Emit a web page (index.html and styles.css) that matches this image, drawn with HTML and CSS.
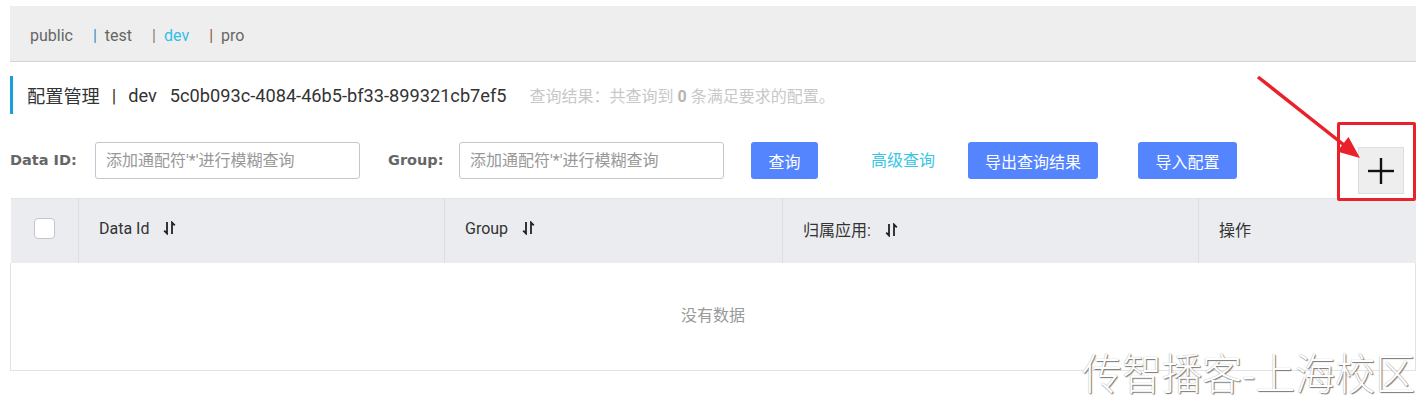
FILE: index.html
```html
<!DOCTYPE html>
<html lang="zh-CN">
  <head>
    <meta charset="UTF-8" />
    <title>配置管理</title>
    <link rel="stylesheet" href="styles.css">
  </head>
  <body>
    <div class="page">
      <!-- Namespace switcher -->
      <div class="ns-bar">
        <span class="ns-item">public</span>
        <span class="ns-sep sep-blue">|</span>
        <span class="ns-item">test</span>
        <span class="ns-sep sep-gray">|</span>
        <span class="ns-item active">dev</span>
        <span class="ns-sep sep-brown">|</span>
        <span class="ns-item">pro</span>
      </div>

      <div class="page-title">
        <span class="title-name">配置管理</span>
        <span class="title-sep">|</span>
        <span class="title-ns">dev</span>
        <span class="title-id">5c0b093c-4084-46b5-bf33-899321cb7ef5</span>
        <span class="query-info">查询结果：共查询到 <strong>0</strong> 条满足要求的配置。</span>
      </div>

      <!-- Search filters -->
      <div class="filter-row">
        <label class="filter-label label-dataid">Data ID:</label>
        <input type="text" class="filter-input" placeholder="添加通配符'*'进行模糊查询" />
        <label class="filter-label label-group">Group:</label>
        <input type="text" class="filter-input" placeholder="添加通配符'*'进行模糊查询" />
        <button class="btn btn-query">查询</button>
        <a href="#" class="advanced-link">高级查询</a>
        <button class="btn btn-export">导出查询结果</button>
        <button class="btn btn-import">导入配置</button>
        <button class="add-btn">
          <svg width="28" height="28" viewBox="0 0 28 28">
            <line x1="14" y1="1" x2="14" y2="27" stroke="#111" stroke-width="2.4"></line>
            <line x1="1" y1="14" x2="27" y2="14" stroke="#111" stroke-width="2.4"></line>
          </svg>
        </button>
      </div>

      <table class="config-table">
        <colgroup>
          <col style="width: 68px" />
          <col style="width: 366px" />
          <col style="width: 338px" />
          <col style="width: 416px" />
          <col />
        </colgroup>
        <thead>
          <tr>
            <th class="check-col"><span class="checkbox"></span></th>
            <th>
              Data Id
              <svg class="sort-icon" width="13" height="14" viewBox="0 0 13 14">
                <path d="M4 1 V12.5 L1.2 9.7" fill="none" stroke="#222" stroke-width="1.8"></path>
                <path d="M9 13 V1.5 L11.8 4.3" fill="none" stroke="#222" stroke-width="1.8"></path>
              </svg>
            </th>
            <th>
              Group
              <svg class="sort-icon" width="13" height="14" viewBox="0 0 13 14">
                <path d="M4 1 V12.5 L1.2 9.7" fill="none" stroke="#222" stroke-width="1.8"></path>
                <path d="M9 13 V1.5 L11.8 4.3" fill="none" stroke="#222" stroke-width="1.8"></path>
              </svg>
            </th>
            <th>
              归属应用:
              <svg class="sort-icon" width="13" height="14" viewBox="0 0 13 14">
                <path d="M4 1 V12.5 L1.2 9.7" fill="none" stroke="#222" stroke-width="1.8"></path>
                <path d="M9 13 V1.5 L11.8 4.3" fill="none" stroke="#222" stroke-width="1.8"></path>
              </svg>
            </th>
            <th class="last-col">操作</th>
          </tr>
        </thead>
        <tbody>
          <tr>
            <td colspan="5" class="empty-cell">没有数据</td>
          </tr>
        </tbody>
      </table>

      <!-- Annotation overlay -->
      <svg class="mark-arrow" width="120" height="100" viewBox="0 0 120 100">
        <line x1="8" y1="7" x2="94" y2="75" stroke="#e8212b" stroke-width="3.5"></line>
        <polygon points="110,88 87,81.5 98.5,67" fill="#e8212b"></polygon>
      </svg>
      <div class="mark-box"></div>

      <div class="watermark">传智播客-上海校区</div>
    </div>
  </body>
</html>
```

FILE: styles.css
```css
* {
  margin: 0;
  padding: 0;
  box-sizing: border-box;
}

body {
  font-family: Roboto, "Noto Sans CJK SC", sans-serif;
  font-size: 16px;
  color: #333;
  background-color: white;
}

.page {
  position: relative;
  min-height: 400px;
  padding: 6px 8px 0 10px;
}

/* Namespace bar */
.ns-bar {
  display: flex;
  align-items: center;
  height: 56px;
  padding: 3px 0 0 20px;
  background-color: #eeeeee;
  border-bottom: 1px solid #d4d4d4;
  color: #666;
}

.ns-item {
  margin-right: 20px;
}

.ns-item.active {
  color: #35bde6;
}

.ns-sep {
  margin-right: 8px;
}

.sep-blue {
  color: #3d8bc4;
}

.sep-gray {
  color: #8a7c77;
}

.sep-brown {
  color: #935a47;
}

/* Page title */
.page-title {
  display: flex;
  align-items: center;
  height: 38px;
  margin-top: 14px;
  padding-left: 14px;
  border-left: 3px solid #16a0dc;
  font-size: 18.2px;
  color: #333;
}

.title-sep {
  margin: 0 12px;
}

.title-ns {
  margin-right: 13px;
}

.query-info {
  margin-left: 23px;
  font-size: 16px;
  color: #c8c8c8;
}

.query-info strong {
  color: #b5b5b5;
}

/* Filters */
.filter-row {
  display: flex;
  align-items: flex-start;
  margin-top: 28px;
}

.filter-label {
  font-family: "DejaVu Sans", sans-serif;
  font-weight: bold;
  font-size: 14.5px;
  line-height: 37px;
  color: #666;
}

.label-dataid {
  width: 85px;
}

.label-group {
  width: 71px;
  margin-left: 28px;
}

.filter-input {
  width: 265px;
  height: 37px;
  padding: 0 10px;
  border: 1px solid #c4c6cf;
  border-radius: 3px;
  font-family: inherit;
  font-size: 16px;
  color: #333;
  outline: none;
}

.filter-input::placeholder {
  color: #999;
}

.btn {
  height: 37px;
  border: none;
  border-radius: 3px;
  background-color: #5584ff;
  color: white;
  font-family: inherit;
  font-size: 16px;
  cursor: pointer;
}

.btn-query {
  width: 67px;
  margin-left: 27px;
}

.advanced-link {
  margin-left: 53px;
  line-height: 37px;
  color: #39c5e5;
  text-decoration: none;
}

.btn-export {
  width: 130px;
  margin-left: 33px;
}

.btn-import {
  width: 99px;
  margin-left: 40px;
}

.add-btn {
  display: flex;
  align-items: center;
  justify-content: center;
  width: 46px;
  height: 47px;
  margin: 5px 12px 0 auto;
  background-color: #eeeeee;
  border: 1px solid #dddddd;
  cursor: pointer;
}

/* Table */
.config-table {
  width: 100%;
  margin-top: 4px;
  border-collapse: collapse;
  table-layout: fixed;
}

.config-table th {
  height: 64px;
  padding: 0 0 4px 20px;
  background-color: #ebecf0;
  border-top: 1px solid #e3e4e8;
  border-right: 1px solid #dcdee3;
  font-weight: normal;
  text-align: left;
  color: #333;
}

.config-table th.check-col {
  padding-left: 0;
  text-align: center;
}

.config-table th.last-col {
  border-right: none;
}

.checkbox {
  display: inline-block;
  width: 21px;
  height: 21px;
  background-color: white;
  border: 1px solid #c4c6cf;
  border-radius: 4px;
  vertical-align: middle;
}

.sort-icon {
  margin-left: 10px;
  vertical-align: -1px;
}

.empty-cell {
  height: 108px;
  padding-bottom: 4px;
  text-align: center;
  color: #999;
  border: 1px solid #e3e3e3;
  border-top: none;
}

/* Screenshot annotation + watermark */
.mark-arrow {
  position: absolute;
  left: 1250px;
  top: 70px;
}

.mark-box {
  position: absolute;
  left: 1337px;
  top: 122px;
  width: 79px;
  height: 79px;
  border: 3px solid #e8212b;
  border-radius: 2px;
}

.watermark {
  position: absolute;
  left: 1082px;
  top: 349px;
  font-family: "Noto Sans CJK SC", sans-serif;
  font-size: 40px;
  font-weight: 300;
  line-height: 42px;
  color: white;
  text-shadow: 1px 1px 1px #777, 0 0 1px #999;
  white-space: nowrap;
  transform: scaleY(1.08);
  transform-origin: left top;
}
```
